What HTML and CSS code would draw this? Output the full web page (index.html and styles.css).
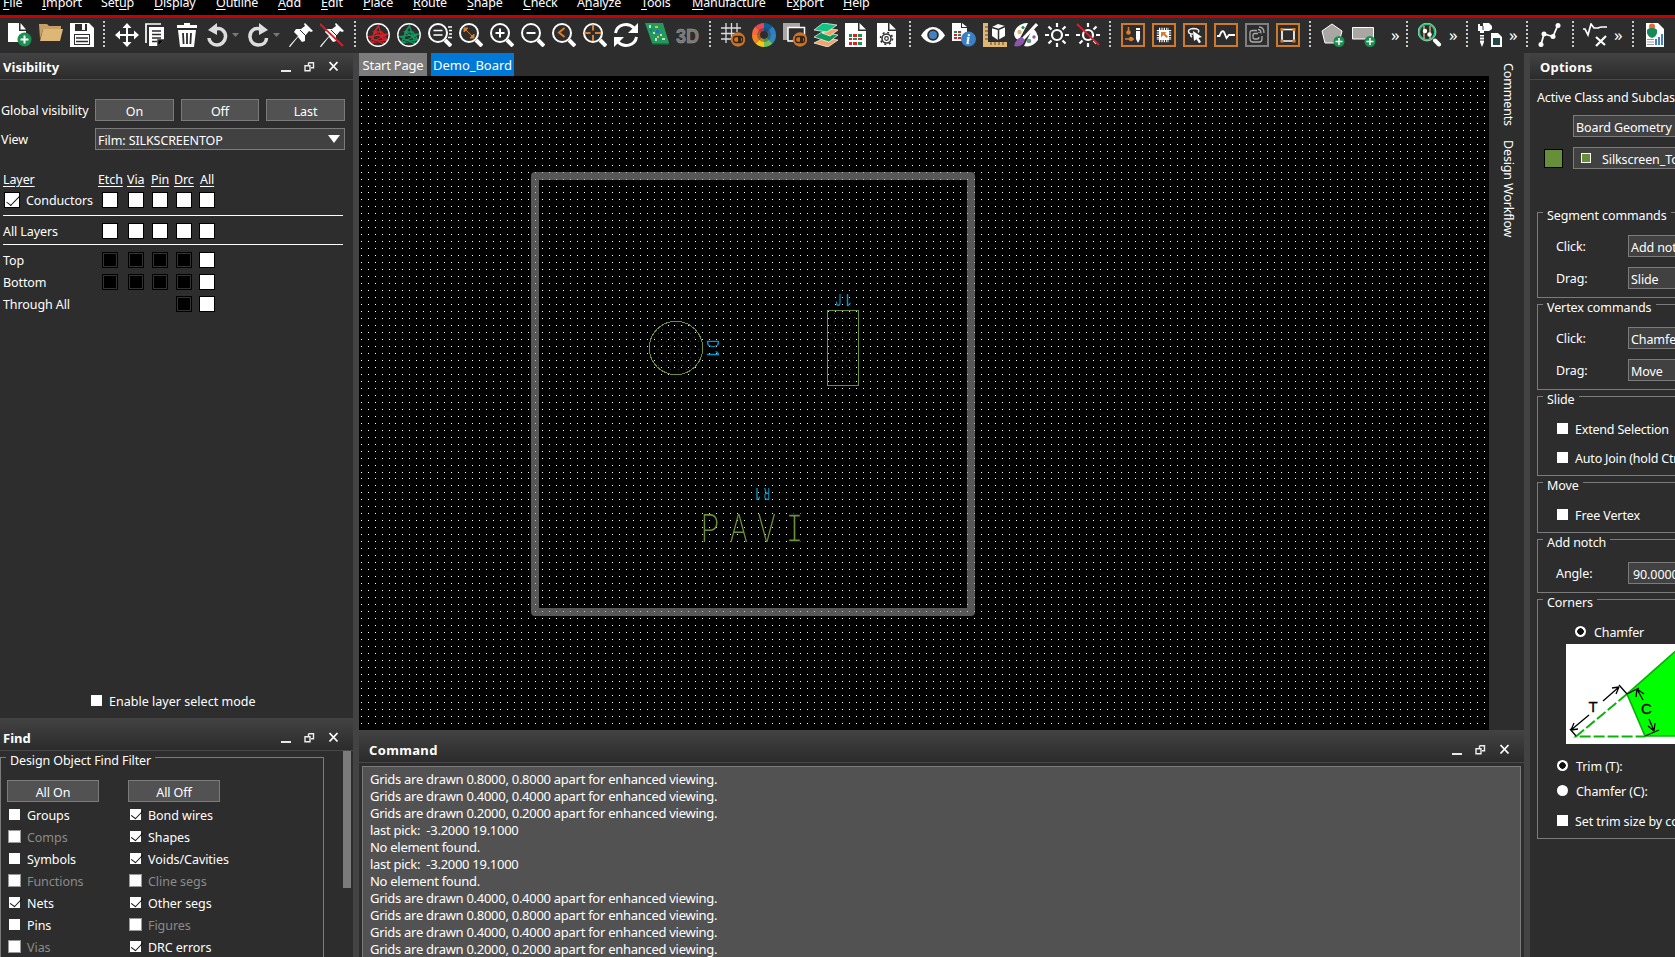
FILE: index.html
```html
<!DOCTYPE html>
<html lang="en">
<head>
<meta charset="utf-8">
<title>Demo_Board</title>
<link rel="stylesheet" href="styles.css">
</head>
<body>
<svg class="defs"><defs>
<symbol id="lens" viewBox="0 0 24 24"><circle cx="10" cy="10" r="9" fill="none" stroke="#fff" stroke-width="2"/><path stroke="#fff" stroke-width="4" d="M17 17l6 6"/></symbol>
<symbol id="pin" viewBox="0 0 24 24"><path fill="#fff" d="M16 0l8 8-2 1-2-1-4 5v5l-3 1-4-5-8 10H0l1-2 8-9-4-4 2-3h5l4-3-1-2z"/><path stroke="#2d2d2d" d="M11 7l6 6"/></symbol>
<symbol id="star" viewBox="0 0 24 24"><path fill="none" stroke="currentColor" stroke-width="1.300" d="M4 20L12.500 2.500 18 21 3 13.500 22 11 4 20l16-3-12-8h8l5 8M12.500 2.500L8 9l-1 8"/><circle cx="12" cy="12" r="11.200" fill="none" stroke="#fff" stroke-width="1.400"/></symbol>
<symbol id="toggle" viewBox="0 0 24 24"><circle cx="17" cy="16.500" r="7.200" fill="#c8742a"/><rect x="12.500" y="13.500" width="9" height="6" rx="2.500" fill="none" stroke="#3a2410" stroke-width="1.300"/><path fill="#3a2410" d="M17 14h3v5h-3z"/></symbol>
<symbol id="plus" viewBox="0 0 24 24"><circle cx="18" cy="18.500" r="5.500" fill="#1a8f52"/><path stroke="#fff" stroke-width="1.500" d="M18 15v7M14.500 18.500h7"/></symbol>
<symbol id="win" viewBox="0 0 60 14"><path stroke="#e8e8e8" stroke-width="2" d="M1 11h10"/><path fill="none" stroke="#eee" stroke-width="1.400" d="M28.500 2.700h5v5H31M25 5.700h5v5h-5zM28.500 5V2.700"/><path stroke="#fff" stroke-width="1.800" d="M49.500 2l8 8.500M57.500 2l-8 8.500"/></symbol>
</defs></svg>
<nav class="menu">
<span><u>F</u>ile</span><span><u>I</u>mport</span><span>Set<u>u</u>p</span><span><u>D</u>isplay</span><span><u>O</u>utline</span><span><u>A</u>dd</span><span><u>E</u>dit</span><span><u>P</u>lace</span><span><u>R</u>oute</span><span><u>S</u>hape</span><span><u>C</u>heck</span><span>A<u>n</u>alyze</span><span><u>T</u>ools</span><span><u>M</u>anufacture</span><span>E<u>x</u>port</span><span><u>H</u>elp</span>
</nav>
<div class="toolbar">
<div class="tg g0">
<svg viewBox="0 0 24 24"><path fill="#fff" d="M0 0h11v8h7v6l-5 5H0zM12.500 0l5.500 6.500h-5.500z"/><circle cx="16.500" cy="16.500" r="7" fill="#1a8f52"/><path stroke="#fff" stroke-width="2" d="M16.500 12.500v8M12.500 16.500h8"/></svg>
<svg viewBox="0 0 24 24"><path fill="#c9a063" d="M0 1h8l2 2h12v3H4L1 16z"/><path fill="#deb778" d="M4 6h20l-3 12H1z"/></svg>
<svg viewBox="0 0 24 24"><path fill="#fff" d="M0 0h19l5 5v19H0z"/><path fill="#2d2d2d" d="M5 1h12v7H5zM4 11h16v11H4z"/><path fill="#fff" d="M12 1h3v6h-3zM5 12h14v9H5z"/><path stroke="#2d2d2d" stroke-width="1.500" d="M6 15h12M6 18.500h12"/></svg>
</div>
<div class="tg sep g1">
<svg viewBox="0 0 24 24"><path fill="#fff" d="M12 0l4.500 5H13v6h6V7.500l5 4.500-5 4.500V13h-6v6h3.500L12 24l-4.500-5H11v-6H5v3.500L0 12l5-4.500V11h6V5H7.500z"/></svg>
<svg viewBox="0 0 24 24" class="l1"><path fill="none" stroke="#fff" stroke-width="1.700" d="M1 20V1h15"/><path fill="#fff" d="M4 4h15v13l-6 6H4z"/><path stroke="#2d2d2d" stroke-width="1.500" d="M7 8h9M7 11.500h9M7 15h9M7 18.500h5M13 23v-6h6"/></svg>
<svg viewBox="0 0 24 24" class="l1"><path fill="#fff" d="M9 0h6v2h7v3H2V2h7zM3 7h18l-2 17H5z"/><path stroke="#2d2d2d" stroke-width="1.800" d="M8 10l.600 11M12 10v11M16 10l-.600 11"/></svg>
<svg class="w41" viewBox="0 0 41 24"><path fill="none" stroke="#ddd" stroke-width="3.500" d="M8 6.500c6-3 11 2 10.500 7.500C18 19 14 22 10 22c-5 0-8-4-8-7"/><path fill="#ddd" d="M10 0v12L1 7z"/><path fill="#777" d="M25 10h7l-3.500 4z"/></svg>
<svg class="w41" viewBox="0 0 41 24"><path fill="none" stroke="#ddd" stroke-width="3.500" d="M13 6.500C7 3.500 1.500 8 2 14c.5 5 4 8 8.500 8 5 0 8-3 8-7"/><path fill="#ddd" d="M11 0v12l9-5z"/><path fill="#777" d="M25 10h7l-3.500 4z"/></svg>
<svg viewBox="0 0 24 24"><use href="#pin"/></svg>
<svg viewBox="0 0 24 24"><use href="#pin"/><path stroke="#d92027" stroke-width="1.800" d="M0 1l23 22"/></svg>
</div>
<div class="tg sep g2">
<svg class="red" viewBox="0 0 24 24"><use href="#star"/></svg>
<svg class="grn" viewBox="0 0 24 24"><use href="#star"/></svg>
<svg viewBox="0 0 24 24"><use href="#lens"/><path stroke="#fff" stroke-width="1.700" d="M5.500 7.500h9M5.500 12h9M20 4h4M21 7.500h3M21 11h3M20 14.500h4"/></svg>
<svg viewBox="0 0 24 24"><use href="#lens"/><path fill="#d97f2c" stroke="#d97f2c" d="M5 5h4L5 9zM15 15h-4l4-4zM6 6l8 8"/></svg>
<svg viewBox="0 0 24 24"><use href="#lens"/><path stroke="#fff" stroke-width="2" d="M5.500 10h9M10 5.500v9"/></svg>
<svg viewBox="0 0 24 24"><use href="#lens"/><path stroke="#fff" stroke-width="2" d="M5.500 10h9"/></svg>
<svg viewBox="0 0 24 24"><use href="#lens"/><path fill="none" stroke="#d97f2c" stroke-width="2" d="M12.500 5L7 9.500l5.500 4.500"/></svg>
<svg viewBox="0 0 24 24"><use href="#lens"/><path stroke="#d97f2c" stroke-width="2" d="M10 1.500v6M10 12v6M1.500 10h6M12 10h6"/></svg>
<svg viewBox="0 0 24 24"><path fill="none" stroke="#fff" stroke-width="3" d="M1.500 10C3 1 14-1 20 5M22.500 14C21 23 10 25 4 19"/><path fill="#fff" d="M24 0v10H14zM0 24V14h10z"/></svg>
<svg viewBox="0 0 24 24"><path fill="#239a5c" d="M0 0h18l6 20H7z"/><path fill="#177a46" d="M7 20h17v1.500H7.500z"/><path fill="#b7e4c5" d="M4 2h2v3H4zM8 9h2v2H8zM15 11h2v2h-2zM17 15h3v2h-3zM10 15h2v3h-2z"/><path fill="#d9c044" d="M10 3h3v2h-3zM12 13h2v2h-2z"/><path fill="#2277a8" d="M11 7h3v3h-3zM5 6h2v3H5z"/></svg>
<svg viewBox="0 0 24 24"><text class="threed" x="0" y="19.500" textLength="23" lengthAdjust="spacingAndGlyphs">3D</text></svg>
</div>
<div class="tg sep g3">
<svg viewBox="0 0 24 24"><path stroke="#ddd" stroke-width="1.300" d="M5 0v20M10.500 0v18M16 0v9M0 5h20M0 10.500h14M0 16h10"/><use href="#toggle"/></svg>
<svg viewBox="0 0 24 24"><g class="wheel"><path stroke="#0e5c99" d="M12 4a8 8 0 0 1 5.700 2.300"/><path stroke="#2d7fc4" d="M17.700 6.300A8 8 0 0 1 20 12"/><path stroke="#3187b8" d="M20 12a8 8 0 0 1-2.300 5.700"/><path stroke="#6fbf59" d="M17.700 17.700A8 8 0 0 1 12 20"/><path stroke="#f9c80e" d="M12 20a8 8 0 0 1-5.700-2.300"/><path stroke="#f58220" d="M6.300 17.700A8 8 0 0 1 4 12"/><path stroke="#f26b3a" d="M4 12a8 8 0 0 1 2.300-5.700"/><path stroke="#e5465b" d="M6.300 6.300A8 8 0 0 1 12 4"/></g><circle cx="12" cy="12" r="5" fill="none" stroke="#333" stroke-opacity=".4" stroke-width="4"/><circle cx="12" cy="12" r="3" fill="#2d2d2d"/></svg>
<svg viewBox="0 0 24 24"><path fill="#aaa6a3" d="M0 0h17v17H0z"/><path fill="#2d2d2d" stroke="#fff" stroke-width="1.500" d="M5 4.500h16.500V18H5z"/><use href="#toggle"/></svg>
<svg viewBox="0 0 24 24"><path fill="#f2a36b" stroke="#fff" stroke-width=".7" d="M0 20l10-5 14 2-10 7z"/><path fill="#0c9a5d" stroke="#fff" stroke-width=".7" d="M0 14l8-5 16 3-9 7z"/><path fill="#f2a36b" stroke="#fff" stroke-width=".7" d="M8 10l10-4 6 1-8 6z"/><path fill="#12c481" stroke="#fff" stroke-width=".7" d="M0 7l9-7 14 2-10 7z"/></svg>
<svg viewBox="0 0 24 24"><path fill="#fff" d="M0 0h13v8h8v16H0zM14.500 0L21 6.500h-6.500z"/><path fill="#1a8f52" d="M4 11h3v3H4zM8 15h4v2H8zM13 19h4v3h-4zM13 11h4v3h-4z"/><path fill="#d92027" d="M8 11h4v3H8zM4 15h3v2H4zM13 15h4v2h-4zM4 19h3v3H4zM8 19h4v3H8z"/></svg>
<svg viewBox="0 0 24 24"><path fill="#fff" d="M1 0h11v8h8v16H1zM13.500 0L20 6.500h-6.500z"/><circle cx="10.500" cy="15.500" r="4.500" fill="none" stroke="#2d2d2d" stroke-width="1.500"/><circle cx="10.500" cy="15.500" r="6" fill="none" stroke="#2d2d2d" stroke-width="1.600" stroke-dasharray="2 2.710"/><circle cx="10.500" cy="15.500" r="1.800" fill="none" stroke="#2d2d2d" stroke-width="1.200"/></svg>
</div>
<div class="tg sep g4">
<svg viewBox="0 0 24 24"><path fill="#fff" d="M0 12.500Q5 4 12 4t12 8.500Q19 20 12 20T0 12.500"/><circle cx="12" cy="12" r="5.800" fill="#2d2d2d"/><circle cx="12" cy="12" r="4" fill="#4480c4"/></svg>
<svg viewBox="0 0 24 24"><path fill="#fff" d="M0 0h9v5h6v13H0zM10 0l5 4h-5z"/><path fill="#1a8f52" d="M2 8h3v2H2zM6 11h3v2H6z"/><path fill="#d92027" d="M6 8h3v2H6zM2 11h3v2H2zM2 14h3v2H2zM6 14h3v2H6z"/><circle cx="16.500" cy="16" r="7.500" fill="#3b7fc4"/><text class="info" x="14" y="21">i</text></svg>
<svg viewBox="0 0 24 24"><path fill="#deb778" d="M0 0h5v19h19v5H0z"/><path stroke="#5b4522" d="M2 4h3M2 8h3M2 12h3M2 16h3M8 19v3M12 19v3M16 19v3M20 19v3"/><path fill="#fff" d="M9 4l6-3 7 2v10l-7 4-6-4z"/><path fill="none" stroke="#2d2d2d" stroke-width="1.500" d="M9 4.500l6.500 2 6.500-3M15.500 6.500V17"/></svg>
<svg viewBox="0 0 24 24"><path fill="#fff" d="M14 0L5 17q-5-1-5-7Q3 0 14 0M19 5q6 6 5 12-6 8-14 6z"/><path stroke="#fff" stroke-width="3" d="M23 1L9 16"/><path fill="#8a55ab" d="M8 14l3 3q-3 8-11 6 2-8 8-9"/><circle cx="9" cy="4.500" r="1.600" fill="#1a8f52"/><circle cx="5.500" cy="9" r="2.200" fill="#deb778"/><circle cx="20" cy="14" r="1.700" fill="#8a55ab"/><circle cx="15" cy="18" r="2.300" fill="#5a9d7d"/></svg>
<svg viewBox="0 0 24 24"><g class="sun"><circle cx="12" cy="12" r="5"/><path d="M12 0v4M12 20v4M0 12h4M20 12h4M3.500 3.500l3 3M17.500 17.500l3 3M20.500 3.500l-3 3M6.500 17.500l-3 3"/></g></svg>
<svg viewBox="0 0 24 24"><g class="sun"><circle cx="12" cy="12" r="5"/><path d="M12 0v4M12 20v4M0 12h4M20 12h4M17.500 17.500l3 3M20.500 3.500l-3 3M6.500 17.500l-3 3"/></g><path stroke="#d92027" stroke-width="1.800" d="M1 1l22 21"/></svg>
</div>
<div class="tg sep g5">
<svg viewBox="0 0 24 24"><path class="ob" d="M1 1h22v22H1z"/><path stroke="#d97f2c" stroke-width="1.500" d="M7.500 4v7M4 16h9"/><circle cx="7.500" cy="9.500" r="2.300" fill="#d97f2c"/><circle cx="10" cy="16" r="2.300" fill="#d97f2c"/><path fill="#fff" d="M15 5h4v11l-2 4-2-4z"/><path stroke="#2d2d2d" d="M15 7.500h4"/></svg>
<svg viewBox="0 0 24 24"><path class="ob" d="M1 1h22v22H1z"/><path fill="#fff" d="M7 7h10v10H7z"/><path stroke="#fff" stroke-dasharray="1.200 1.200" d="M7 6h10M7 18h10M6 7v10M18 7v10" stroke-width="2.400"/><path fill="#d97f2c" d="M9 9h5.500l-1.500 1.500 3 3-1.500 1.500-3-3L9 14.500z"/></svg>
<svg viewBox="0 0 24 24"><path class="ob" d="M1 1h22v22H1z"/><path fill="none" stroke="#eee" stroke-width="1.500" d="M10 11C4 11 4 6 10 5.500c5 0 7 2 5 4M8 11q-1 2 1 3"/><path fill="#fff" d="M10 8l9 6-3.500 1 2.500 4-2 1.200-2.500-4L11 18z"/></svg>
<svg viewBox="0 0 24 24"><path class="ob" d="M1 1h22v22H1z"/><path fill="none" stroke="#fff" stroke-width="1.800" d="M3 13h2.500Q8 6 10 9l2.500 6 2.500-3h6"/></svg>
<svg viewBox="0 0 24 24"><path fill="none" stroke="#808080" stroke-width="2" d="M1 1h22v22H1z"/><path fill="none" stroke="#aaa" stroke-width="1.300" d="M12 7.500H8Q5 7.500 5 10v6q0 3 3 3h6q3 0 3-3v-3M13 10.500H9.500Q8 10.500 8 12v2.500q0 1.500 1.500 1.500H12q2 0 2-2M14 10v-1M13 6.500q3 0 3 4M14 4q5 0 5 6"/></svg>
<svg viewBox="0 0 24 24"><path class="ob" d="M1 1h22v22H1z"/><path fill="none" stroke="#fff" stroke-width="1.700" d="M6 6.500h12v11.500H6z"/><path fill="#d97f2c" d="M4.500 5h3v3h-3zM16.500 5h3v3h-3zM4.500 16.500h3v3h-3zM16.500 16.500h3v3h-3z"/></svg>
</div>
<div class="tg sep g6">
<svg viewBox="0 0 24 24"><path fill="#aaa6a3" stroke="#fff" d="M11 1l10 7-3 12H4L1 8z"/><use href="#plus"/></svg>
<svg viewBox="0 0 24 24"><path fill="#aaa6a3" stroke="#fff" d="M.5 4.500h21V16H.5z"/><use href="#plus"/></svg>
<b class="more">»</b>
</div>
<div class="tg sep g7">
<svg viewBox="0 0 24 24"><circle cx="9" cy="9" r="8" fill="#2d2d2d" stroke="#24c77a" stroke-width="2"/><circle cx="9" cy="9" r="9" fill="none" stroke="#d9f7e6" stroke-width=".6"/><path stroke="#fff" stroke-width="4" stroke-linecap="round" d="M17 17.500l4 4"/><path stroke="#deb778" stroke-width="1.300" d="M6 3v13M12 3v13"/><circle cx="7" cy="8" r="2.200" fill="#fff"/><circle cx="11.500" cy="11.500" r="2.200" fill="#fff"/></svg>
<b class="more">»</b>
</div>
<div class="tg sep g8">
<svg viewBox="0 0 24 24"><path fill="#fff" d="M0 1h2v2h3V0h6l3 3v3l-3 2H6v2H2V8H0zM2 12h4v7l-2 5-2-5zM13 10h7l4 4v10H13z"/><path stroke="#2d2d2d" d="M2 14h4M2 17h4M5 3v4"/><path fill="#24464a" d="M15 15h7v7h-7z"/></svg>
<b class="more">»</b>
</div>
<div class="tg sep g9">
<svg viewBox="0 0 24 24"><path fill="none" stroke="#fff" stroke-width="1.800" d="M3 21.500L6 11l9 2.500L19.500 3"/><g fill="#fff"><circle cx="3" cy="21.500" r="2.500"/><circle cx="6" cy="11" r="2.500"/><circle cx="15" cy="13.500" r="2.500"/><circle cx="20" cy="2.500" r="2.500"/></g></svg>
</div>
<div class="tg sep g10">
<svg viewBox="0 0 24 24"><path fill="none" stroke="#fff" stroke-width="1.700" d="M0 6h2l3 6L8 1l3 4h4q2-1 4-1h5"/><path stroke="#fff" stroke-width="2.200" d="M13 14l9 8M23 13l-10 10"/></svg>
<b class="more">»</b>
</div>
<div class="tg sep g11">
<svg viewBox="0 0 24 24"><path fill="#fff" d="M0 0h12l6 6v18H0z"/><circle cx="6" cy="3.500" r="3" fill="#e56a2c"/><path fill="#16885a" d="M1 7q1-2 5-2t5 2v3q-1 4-5 5-4-1-5-5z"/><path fill="#4480c4" d="M9 16h2v6H9zM12 14h2v8h-2zM15 11h2v11h-2z"/><path fill="#999" d="M1 16h7v1H1zM1 18.500h7v1H1zM1 21h7v1H1z"/></svg>
</div>
</div>

<main class="work">
<aside class="dock">
<section class="vis">
<header class="head h1">Visibility<svg class="wb"><use href="#win"/></svg></header>
<div class="gv"><span>Global visibility</span><button>On</button><button>Off</button><button>Last</button></div>
<div class="view"><span>View</span><div class="combo">Film: SILKSCREENTOP<i></i></div></div>
<div class="lr lh"><u>Layer</u><u>Etch</u><u>Via</u><u>Pin</u><u>Drc</u><u>All</u></div>
<div class="lr lc"><span><i class="cb big on"></i>Conductors</span><i class="sw"></i><i class="sw"></i><i class="sw"></i><i class="sw"></i><i class="sw"></i></div>
<div class="lr la"><span>All Layers</span><i class="sw"></i><i class="sw"></i><i class="sw"></i><i class="sw"></i><i class="sw"></i></div>
<div class="lr"><span>Top</span><i class="sw k"></i><i class="sw k"></i><i class="sw k"></i><i class="sw k"></i><i class="sw"></i></div>
<div class="lr"><span>Bottom</span><i class="sw k"></i><i class="sw k"></i><i class="sw k"></i><i class="sw k"></i><i class="sw"></i></div>
<div class="lr"><span>Through All</span><b></b><b></b><b></b><i class="sw k"></i><i class="sw"></i></div>
<label class="els"><i class="cb"></i>Enable layer select mode</label>
</section>
<section class="find">
<header class="head h2">Find<svg class="wb"><use href="#win"/></svg></header>
<div class="fbody">
<div class="grp ff"><em>Design Object Find Filter</em>
<div class="cols">
<div><button>All On</button><label><i class="cb"></i>Groups</label><label class="d"><i class="cb"></i>Comps</label><label><i class="cb"></i>Symbols</label><label class="d"><i class="cb"></i>Functions</label><label><i class="cb on"></i>Nets</label><label><i class="cb"></i>Pins</label><label class="d"><i class="cb"></i>Vias</label></div>
<div><button>All Off</button><label><i class="cb on"></i>Bond wires</label><label><i class="cb on"></i>Shapes</label><label><i class="cb on"></i>Voids/Cavities</label><label class="d"><i class="cb"></i>Cline segs</label><label><i class="cb on"></i>Other segs</label><label class="d"><i class="cb"></i>Figures</label><label><i class="cb on"></i>DRC errors</label></div>
</div></div>
<div class="scroll"></div>
</div>
</section>
</aside>
<section class="center">
<div class="upper">
<div class="doc">
<div class="tabs"><span>Start Page</span><span class="act">Demo_Board</span></div>
<div class="pcb"><canvas id="grid" width="1130" height="654"></canvas>
<svg class="parts" viewBox="359 76 1130 654">
<g fill="none" stroke="#6b8f35" shape-rendering="crispEdges"><circle cx="676" cy="348" r="26.700"/><path d="M827.500 310.500h31v75h-31z"/></g>
<g class="ref"><text transform="translate(835.500 306) scale(.65 1)">J</text><text transform="translate(851 294) rotate(180) scale(.8 1)">1</text>
<text transform="translate(707 340) rotate(90) scale(.65 1)">D</text><text transform="translate(707 351) rotate(90) scale(.8 1)">1</text>
<text transform="translate(770 488) rotate(180) scale(.6 1)">R</text><text transform="translate(760.500 488) rotate(180) scale(.8 1)">1</text></g>
<g class="silk"><text transform="translate(700.500 542) scale(.8 1)">P</text><text transform="translate(729.500 542) scale(.73 1)">A</text><text transform="translate(757.500 542) scale(.73 1)">V</text><text class="serif" transform="translate(786 542) scale(.66 1)">I</text></g>
</svg></div>
</div>
<div class="side"><span>Comments</span><span>Design Workflow</span></div>
</div>
<div class="cmd">
<header class="head h2">Command<svg class="wb"><use href="#win"/></svg></header>
<pre class="log">Grids are drawn 0.8000, 0.8000 apart for enhanced viewing.
Grids are drawn 0.4000, 0.4000 apart for enhanced viewing.
Grids are drawn 0.2000, 0.2000 apart for enhanced viewing.
last pick:  -3.2000 19.1000
No element found.
last pick:  -3.2000 19.1000
No element found.
Grids are drawn 0.4000, 0.4000 apart for enhanced viewing.
Grids are drawn 0.8000, 0.8000 apart for enhanced viewing.
Grids are drawn 0.4000, 0.4000 apart for enhanced viewing.
Grids are drawn 0.2000, 0.2000 apart for enhanced viewing.</pre>
</div>
</section>
<aside class="opts">
<header class="head h1">Options</header>
<p class="acs">Active Class and Subclass:</p>
<div class="combo o1">Board Geometry</div>
<div class="sub"><i class="green"></i><div class="combo"><i class="gs"></i>Silkscreen_Top</div></div>
<div class="grp seg"><em>Segment commands</em><div class="row"><span>Click:</span><div class="combo">Add notch</div></div><div class="row"><span>Drag:</span><div class="combo">Slide</div></div></div>
<div class="grp seg"><em>Vertex commands</em><div class="row"><span>Click:</span><div class="combo">Chamfer</div></div><div class="row"><span>Drag:</span><div class="combo">Move</div></div></div>
<div class="grp slide"><em>Slide</em><label><i class="cb"></i>Extend Selection&nbsp;</label><label><i class="cb"></i>Auto Join (hold Ctrl)</label></div>
<div class="grp move"><em>Move</em><label><i class="cb"></i>Free Vertex</label></div>
<div class="grp notch"><em>Add notch</em><div class="row"><span>Angle:</span><div class="combo num">90.0000</div></div></div>
<div class="grp corn"><em>Corners</em>
<label class="r0"><i class="rd on"></i>Chamfer</label>
<svg class="dia" viewBox="0 0 120 100"><path fill="#fff" d="M0 0h120v100H0z"/><path fill="#0f0" stroke="#0ab30a" stroke-width="1.700" d="M130-11L61 50l18 42h60"/><path fill="none" stroke="#0ab30a" stroke-width="2" stroke-dasharray="11 3" d="M61 50L10 92.500h69"/><g fill="none" stroke="#000" stroke-width="1.300"><path d="M10 92l-6-7M61 50l-8-9M61 50l12-6M79 92l14-6M5 86l18-15M37 57l16-14M5 86l3-7M5 86l7-1M53 43l-3 7M53 43l-7 1M77 56l-6-11M71 45l-1 8M71 45l7 5M83 75l5 12M88 87l1-8M88 87l-6-5"/></g><text x="22.500" y="68">T</text><text x="75" y="70">C</text></svg>
<label class="r1"><i class="rd on"></i>Trim (T):</label><label class="r2"><i class="rd"></i>Chamfer (C):</label><label class="r3"><i class="cb"></i>Set trim size by corner</label></div>
</aside>
</main>
<script src="grid.js"></script>
</body>
</html>
```
FILE: styles.css
```css
* { box-sizing: border-box; }
body { margin: 0; width: 1675px; height: 957px; overflow: hidden; background: #2d2d2d; color: #fff; font: 12.5px/16px "Noto Sans", "Open Sans", sans-serif; letter-spacing: -.1px; display: flex; flex-direction: column; }
i, em { font-style: normal; }
u { text-underline-offset: 2px; }
.defs { position: absolute; width: 0; height: 0; }
.menu { height: 15px; background: #000; display: grid; flex: none; grid-template-columns: 39px 59px 53px 62px 62px 43px 42px 50px 54px 56px 54px 64px 51px 94px 57px 40px; padding-left: 3px; overflow: hidden; letter-spacing: -.15px; }
.menu span { margin-top: -5px; white-space: nowrap; }
.toolbar { height: 38px; flex: none; border-top: 3px solid #c80000; display: flex; }
.tg { display: flex; flex: none; position: relative; padding-top: 5px; }
.tg svg { width: 24px; height: 24px; margin-right: 7px; flex: none; }
.tg svg.w41 { width: 41px; margin: 0; }
.tg svg.l1 { margin-left: -1px; }
.tg svg.l1 + .w41 { margin-left: 1px; }
.red { color: #d92027; }
.grn { color: #0f9960; }
.sep { background: repeating-linear-gradient(#c8c8c8 0 2px, transparent 2px 4px) 0 3px / 2px 26px no-repeat; }
.g0 { width: 103px; padding-left: 8px; }
.g1 { width: 251px; padding-left: 12px; }
.g2 { width: 355px; padding-left: 12px; }
.g3, .g4, .g5 { width: 200px; padding-left: 12px; }
.g6 { width: 97px; padding-left: 12px; }
.g7, .g8 { width: 60px; padding-left: 12px; }
.g10 { width: 60px; padding-left: 11px; }
.g9 { width: 46px; padding-left: 12px; }
.g11 { width: 43px; padding-left: 14px; }
.more { font-size: 17px; line-height: 24px; font-weight: 400; }
.g6 .more { margin-left: 8px; }
.threed { font: bold 20px "Liberation Sans", sans-serif; fill: #777; stroke: #999; stroke-width: .5; }
.info { font: italic bold 14px "Liberation Serif", serif; fill: #fff; }
.wheel { fill: none; stroke-width: 8; }
.sun { fill: none; stroke: #fff; stroke-width: 2.2; }
.ob { fill: none; stroke: #cf7a2b; stroke-width: 2; }
.work { flex: 1; display: flex; min-height: 0; }
.dock { width: 359px; border-right: 6px solid #434343; display: flex; flex-direction: column; flex: none; }
.head { display: flex; justify-content: space-between; align-items: center; font-weight: 700; font-size: 13px; letter-spacing: .05px; border-bottom: 1px solid #484848; background: linear-gradient(#434343, #2b2b2b); padding-left: 3px; flex: none; }
.h1 { height: 27px; padding-top: 2px; }
.h2 { height: 33px; padding-top: 8px; }
.wb { display: block; width: 60px; height: 14px; margin: -1px 13px 0 0; }
.vis { height: 665px; position: relative; display: flex; flex-direction: column; flex: none; }
button, .combo { font: inherit; letter-spacing: inherit; color: #fff; border: 1px solid #7b7b7b; background: #525252; height: 22px; padding: 3px 0 0; line-height: 16px; }
.combo { background: #414141; padding: 4px 2px 0; white-space: nowrap; position: relative; }
.gv { margin: 19px 8px 0 1px; display: grid; grid-template-columns: 87px 79px 78px 79px; column-gap: 7px; align-items: center; height: 22px; white-space: nowrap; }
.gv span, .view span, .row span { padding-top: 2px; }
.gv span { letter-spacing: -.03px; }
.view { margin: 7px 8px 0 1px; display: grid; grid-template-columns: 94px 250px; align-items: center; }
.view .combo i { position: absolute; right: 4px; top: 6px; border: 6px solid transparent; border-top: 8px solid #fff; border-bottom: 0; }
.lr { display: grid; grid-template-columns: 99px 26px 24px 24px 23px 30px; margin: 0 10px 6px 3px; height: 16px; align-items: center; white-space: nowrap; }
.lr span { padding-top: 2px; }
.lr.lh { margin-top: 22px; margin-bottom: 3px; grid-template-columns: 95px 29px 24px 23px 26px 30px; }
.lr.lc { height: 25px; border-bottom: 1px solid #fff; padding-bottom: 8px; }
.lr.la { height: 23px; border-bottom: 1px solid #fff; padding-bottom: 6px; margin-bottom: 6px; }
.lc span { display: flex; gap: 6px; align-items: center; margin-left: 1px; }
.sw { width: 16px; height: 16px; background: #fff; border: 1px solid #000; margin-top: -1px; }
.sw.k { background: #000; box-shadow: inset 0 0 0 1px #333; }
.lc .sw { margin-top: 0; }
.cb { width: 11px; height: 11px; background: #fff; flex: none; position: relative; margin-top: -3px; }
.cb.big { width: 16px; height: 16px; border: 1px solid #000; margin-top: -2px; }
.cb.on::after { content: ""; position: absolute; left: 3.5px; top: -1px; width: 5px; height: 10px; border: solid #111; border-width: 0 1.5px 1.5px 0; transform: rotate(38deg) skewX(-6deg); }
.cb.big.on::after { left: 5px; top: 0; width: 5px; height: 12px; }
label { display: flex; align-items: center; gap: 7px; white-space: nowrap; padding-top: 2px; }
.els { margin: auto 0 8px 91px; letter-spacing: .02px; }
.find { flex: 1; display: flex; flex-direction: column; min-height: 0; }
.fbody { flex: 1; display: flex; justify-content: space-between; min-height: 0; }
.grp { border: 1px solid #7b7b7b; position: relative; }
.grp em { position: absolute; left: 5px; top: -5px; line-height: 16px; background: #2d2d2d; padding: 0 4px; white-space: nowrap; }
.ff { width: 324px; margin-top: 6px; height: 220px; padding: 22px 0 0 6px; }
.cols { display: grid; grid-template-columns: 121px 121px; }
.cols button { display: block; width: 92px; margin-bottom: 2px; }
.cols label { height: 22px; padding-left: 2px; letter-spacing: -.05px; }
.d { color: #8b8b8b; }
.d .cb { box-shadow: 0 0 0 1px #999; }
.scroll { width: 8px; height: 137px; background: #7b7b7b; margin-right: 2px; }
.center { width: 1165px; flex: none; display: flex; flex-direction: column; }
.upper { height: 677px; display: flex; flex: none; }
.doc { width: 1130px; }
.tabs { height: 23px; display: flex; gap: 4px; line-height: 24px; font-size: 13px; letter-spacing: -.22px; }
.tabs span { width: 68px; background: #7b7b7b; text-align: center; white-space: nowrap; }
.tabs .act { width: 83px; background: #0078d7; letter-spacing: -.05px; }
.pcb { position: relative; height: 654px; background: #000; }
.pcb canvas, .parts { position: absolute; left: 0; top: 0; width: 1130px; height: 654px; }
.ref { font: 400 16px "Inter", sans-serif; fill: #0a93bd; stroke: #0a93bd; stroke-width: .2px; letter-spacing: 0; }
.silk { font: 200 38.5px "Inter", sans-serif; fill: #6b9035; letter-spacing: 0; }
.silk .serif { font: 43px "Liberation Mono", monospace; stroke: #000; stroke-width: 1.4px; }
.side { width: 35px; writing-mode: vertical-rl; display: flex; gap: 14px; padding: 10px 8px 0 0; align-items: flex-start; justify-content: flex-start; line-height: 16px; white-space: nowrap; letter-spacing: -.15px; }
.cmd { flex: 1; display: flex; flex-direction: column; min-height: 0; }
.cmd .head { padding-left: 10px; letter-spacing: .35px; }
.log { flex: 1; margin: 3px 3px 0; border: 1px solid #7b7b7b; border-bottom: 0; background: #525252; font: inherit; font-size: 13px; line-height: 17px; letter-spacing: -.28px; padding: 4px 0 0 7px; overflow: hidden; }
.opts { flex: 1; border-left: 6px solid #434343; overflow: hidden; white-space: nowrap; min-width: 0; }
.opts .head { padding-left: 10px; letter-spacing: .2px; }
.acs { margin: 10px 0 9px 7px; line-height: 16px; letter-spacing: -.17px; }
.o1 { margin-left: 43px; width: 120px; }
.sub { display: flex; margin: 10px 0 43px 14px; align-items: center; gap: 10px; }
.sub .combo { width: 120px; padding-left: 28px; flex: none; }
.green { width: 19px; height: 19px; background: #678f3a; border: 1px solid #000; flex: none; }
.gs { position: absolute; left: 7px; top: 5px; width: 10px; height: 10px; background: #678f3a; border: 1px solid #fff; }
.opts .grp { margin: 0 -20px 6px 7px; padding-left: 18px; }
.opts .grp em { padding: 0 4px; }
.opts .cb { margin-top: -2px; }
.seg { height: 86px; padding-top: 22px; }
.row { display: grid; grid-template-columns: 72px 120px; align-items: center; margin-bottom: 10px; }
.num { padding-left: 4px; }
.slide { height: 80px; padding-top: 20px; }
.slide label { height: 29px; margin-top: -3px; margin-bottom: 3px; padding-left: 1px; letter-spacing: -.2px; }
.move { height: 51px; padding-top: 17px; }
.move label, .corn label { height: 29px; padding-left: 1px; line-height: 18px; }
.notch { height: 54px; padding-top: 22px; }
.corn { height: 240px; padding-top: 17px; position: relative; }
.corn .r0 { padding-left: 19px; height: 27px; padding-top: 4px; }
.dia { display: block; width: 120px; height: 100px; margin-left: 10px; }
.dia text { font: 15px "Liberation Sans", sans-serif; fill: #000; stroke: #000; stroke-width: .3; letter-spacing: 0; }
.rd { width: 11px; height: 11px; border-radius: 50%; background: #fff; margin: -2px 1px 0 0; flex: none; }
.rd.on { background: radial-gradient(#111 0 3px, #fff 3.5px); }
.corn .r1 { margin-top: 9px; }
.corn .r1, .corn .r2 { height: 25px; }
.corn .r3 { margin-top: 3px; }
```
FILE: grid.js
```js
// Draws the board outline, the fill stipple of the parts and the snap grid.
const ctx = document.getElementById('grid').getContext('2d');
ctx.translate(-359, -76);
ctx.strokeStyle = '#575757';
ctx.lineWidth = 8;
ctx.lineJoin = 'round';
ctx.strokeRect(535, 176, 436, 436);
ctx.fillStyle = '#303d1b';
for (let r = 0; r < 19; r++) {
  const y = 313 + r * 4;
  for (let c = 0; c < 4; c++) ctx.fillRect(830 + c * 8 + (r % 2 ? 0 : 4), y, 1, 1);
}
for (let r = 0; r < 12; r++) {
  const y = 325 + r * 4;
  for (let c = 0; c < 8; c++) {
    const x = 646 + c * 8 + (r % 2 ? 0 : 4);
    if (Math.hypot(x - 676, y - 348) < 25) ctx.fillRect(x, y, 1, 1);
  }
}
for (let y = 81.4; y < 729; y += 6.975) {
  for (let x = 361.1; x < 1488; x += 6.975) {
    const px = Math.floor(x), py = Math.floor(y);
    const onEdge = px >= 531 && px < 975 && py >= 172 && py < 616 &&
      !(px >= 539 && px < 967 && py >= 180 && py < 608);
    ctx.fillStyle = onEdge ? '#c4c4c4' : '#fff';
    ctx.fillRect(px, py, 1, 1);
  }
}
```
